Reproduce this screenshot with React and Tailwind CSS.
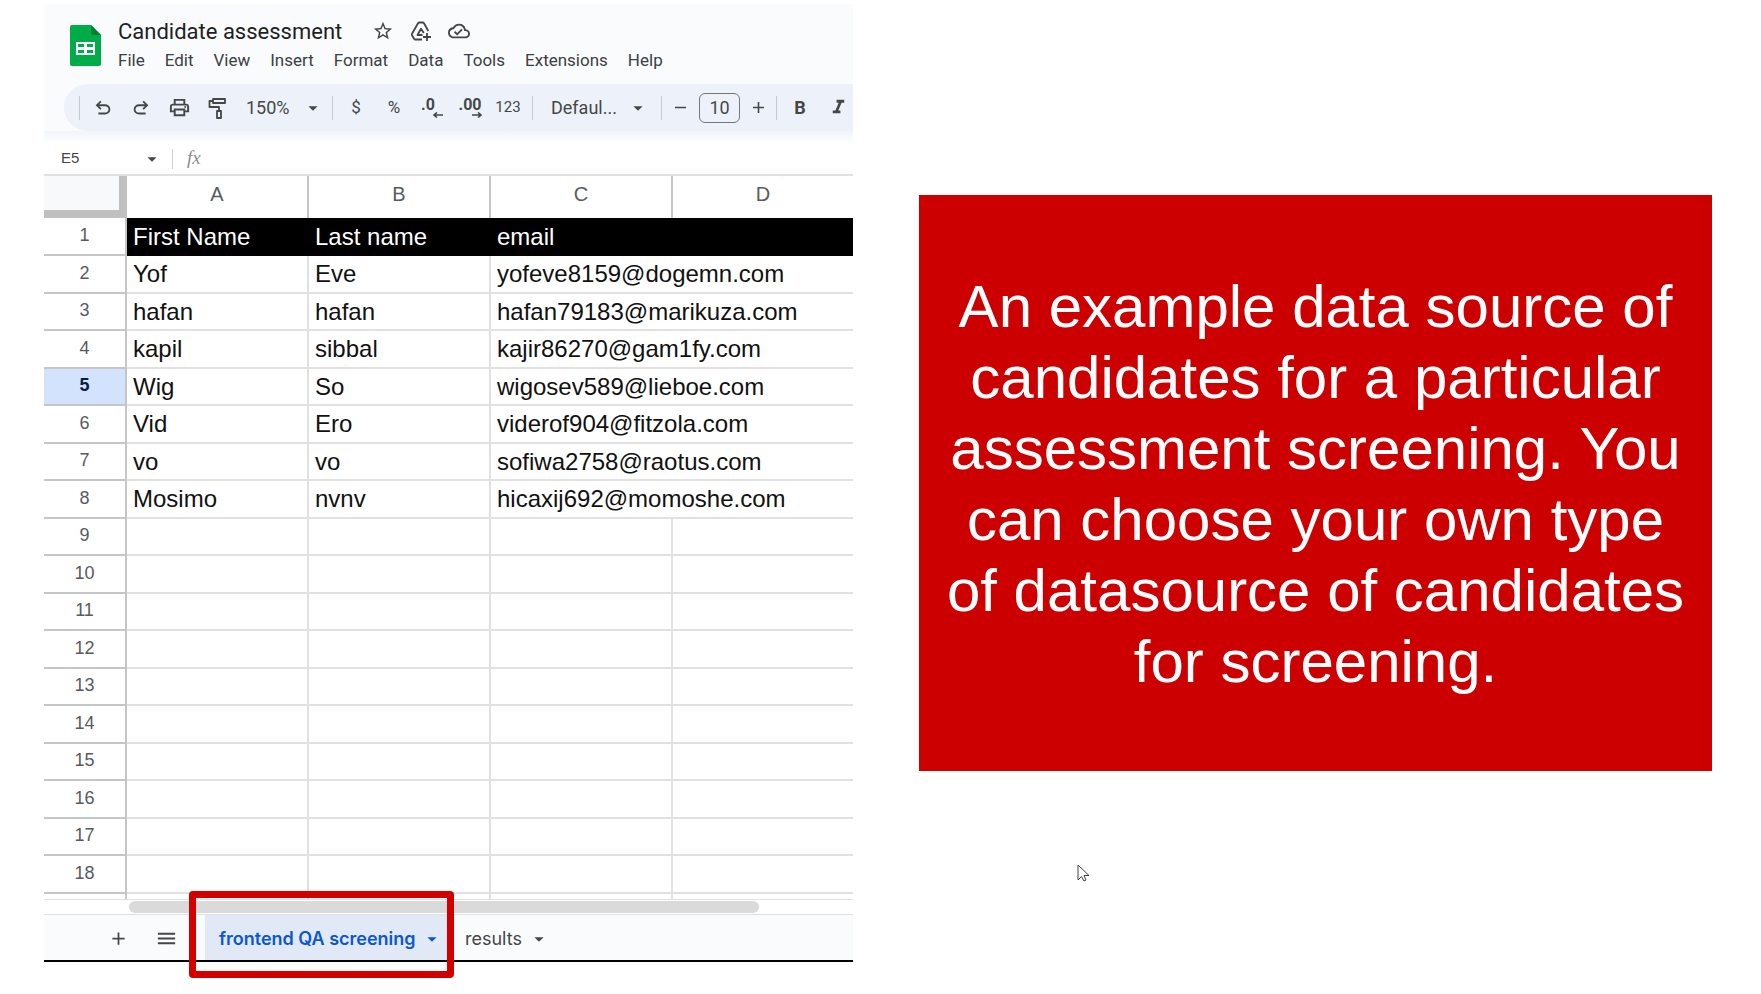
import React, { useState } from 'react'
import { MdAdd, MdArrowDropDown, MdFormatItalic, MdMenu, MdOutlineCloudDone, MdOutlinePrint, MdRemove, MdStarBorder } from 'react-icons/md'

const menus = ['File', 'Edit', 'View', 'Insert', 'Format', 'Data', 'Tools', 'Extensions', 'Help']

const people = [
    { first: 'Yof', last: 'Eve', email: 'yofeve8159@dogemn.com' },
    { first: 'hafan', last: 'hafan', email: 'hafan79183@marikuza.com' },
    { first: 'kapil', last: 'sibbal', email: 'kajir86270@gam1fy.com' },
    { first: 'Wig', last: 'So', email: 'wigosev589@lieboe.com' },
    { first: 'Vid', last: 'Ero', email: 'viderof904@fitzola.com' },
    { first: 'vo', last: 'vo', email: 'sofiwa2758@raotus.com' },
    { first: 'Mosimo', last: 'nvnv', email: 'hicaxij692@momoshe.com' },
]

const emptyRows = [9, 10, 11, 12, 13, 14, 15, 16, 17, 18]

const SheetsLogo = () => (
    <svg viewBox="0 0 31 41" className="h-[41px] w-[31px]">
        <path d="M2 0h19l10 10v29a2 2 0 0 1-2 2H2a2 2 0 0 1-2-2V2a2 2 0 0 1 2-2z" fill="#00ac47" />
        <path d="M21 0l10 10H23a2 2 0 0 1-2-2z" fill="#00832d" />
        <path d="M6 17h19v13H6z" fill="#fff" />
        <path d="M8 19h6v3H8zM17 19h6v3h-6zM8 25h6v3H8zM17 25h6v3h-6z" fill="#00ac47" />
    </svg>
)

const AddToDrive = () => (
    <svg viewBox="0 0 22 22" fill="none" stroke="currentColor" strokeWidth="1.800" strokeLinejoin="round" className="size-[22px]">
        <path d="M12 19.500H5.500Q4.500 19.500 4 18.700L2 15.200Q1.600 14.500 2 13.800L8 3.300Q8.500 2.500 9.400 2.500H12.600Q13.500 2.500 14 3.300L18.300 11" />
        <path d="M12.500 15H7.500L11 8.800L13.800 13" />
        <path d="M17 13v8M13 17h8" />
    </svg>
)

const Undo = () => (
    <svg viewBox="0 0 24 24" fill="currentColor" className="size-[22px]">
        <path d="M7 19v-2h7.1q1.575 0 2.738-1T18 13.5q0-1.5-1.163-2.5T14.1 10H7.8l2.6 2.6L9 14 4 9l5-5 1.4 1.4L7.8 8h6.3q2.425 0 4.163 1.575T20 13.5q0 2.35-1.737 3.925T14.1 19z" />
    </svg>
)

const Redo = () => (
    <svg viewBox="0 0 24 24" fill="currentColor" className="size-[22px]">
        <path d="M9.9 19q-2.425 0-4.163-1.575T4 13.5q0-2.35 1.738-3.925T9.9 8h6.3l-2.6-2.6L15 4l5 5-5 5-1.4-1.4 2.6-2.6H9.9q-1.575 0-2.738 1T6 13.5q0 1.5 1.163 2.5T9.9 17H17v2z" />
    </svg>
)

const PaintRoller = () => (
    <svg viewBox="0 0 18 22" fill="none" stroke="currentColor" strokeWidth="1.800" strokeLinejoin="round" className="h-[22px] w-[18px]">
        <path d="M5 2h12v4H5zM5 4H1.500v6H11v4M9 14h4v7H9z" />
    </svg>
)

const Decimals = ({ digits, right }) => (
    <span className="flex flex-col items-end">
        <span className={right ? 'text-[16px] leading-[14px] font-bold' : 'pr-2 text-[16px] leading-[14px] font-bold'}>{digits}</span>
        <svg viewBox="0 0 10 6" fill="none" stroke="currentColor" strokeWidth="1.600" className="h-[6px] w-[10px]">
            <path d={right ? 'M0 3h9M6 0.500L9 3L6 5.500' : 'M10 3H1M4 0.500L1 3l3 2.500'} />
        </svg>
    </span>
)

const ToolButton = ({ label, children }) => (
    <button type="button" aria-label={label} className="flex h-8 w-[38px] shrink-0 items-center justify-center">
        {children}
    </button>
)

const Divider = () => <div className="h-6 w-px shrink-0 bg-[#c7cbd1]" />

const Toolbar = () => {
    const [size, setSize] = useState('10')

    return (
        <div className="ml-5 flex h-[47px] items-center overflow-hidden rounded-l-full bg-[#edf2fa] pl-[15px] text-[18px] text-[#444746]">
            <Divider />
            <div className="ml-1 flex">
                <ToolButton label="Undo"><Undo /></ToolButton>
                <ToolButton label="Redo"><Redo /></ToolButton>
                <ToolButton label="Print"><MdOutlinePrint size={23} /></ToolButton>
                <ToolButton label="Paint format"><PaintRoller /></ToolButton>
            </div>
            <button type="button" className="flex w-[88px] shrink-0 items-center justify-between pl-[10px]">
                150%
                <MdArrowDropDown size={22} />
            </button>
            <div className="ml-2"><Divider /></div>
            <div className="ml-1 flex text-[17px]">
                <ToolButton label="Currency">$</ToolButton>
                <ToolButton label="Percent">%</ToolButton>
                <ToolButton label="Fewer decimals"><Decimals digits=".0" /></ToolButton>
                <ToolButton label="More decimals"><Decimals digits=".00" right /></ToolButton>
                <ToolButton label="More formats"><span className="text-[15px]">123</span></ToolButton>
            </div>
            <div className="ml-[5px]"><Divider /></div>
            <button type="button" className="flex w-[116px] shrink-0 items-center justify-between pl-[18px]">
                Defaul...
                <MdArrowDropDown size={22} />
            </button>
            <div className="ml-3"><Divider /></div>
            <button type="button" aria-label="Smaller" className="flex w-[37px] shrink-0 justify-center"><MdRemove size={19} /></button>
            <input
                aria-label="Font size"
                value={size}
                onChange={(e) => setSize(e.target.value)}
                className="h-[30px] w-[41px] shrink-0 rounded-md border border-[#747775] text-center"
            />
            <button type="button" aria-label="Larger" className="flex w-[36px] shrink-0 justify-center"><MdAdd size={19} /></button>
            <Divider />
            <div className="ml-1 flex">
                <ToolButton label="Bold"><b>B</b></ToolButton>
                <ToolButton label="Italic"><MdFormatItalic size={23} /></ToolButton>
            </div>
        </div>
    )
}

const rowHead = 'border-r-2 border-b-2 border-[#c4c7c5] pb-[3px] text-center text-[18px] leading-[26px] font-normal'
const cell = 'border-r-2 border-b-2 border-[#e1e1e1] pl-[6px] text-left'
const colHead = 'border-r-2 border-[#c4c7c5] pb-[6px] font-normal'

const Grid = () => (
    <table className="w-full table-fixed border-separate border-spacing-0 font-['Liberation_Sans',Arial,sans-serif] text-[24px] leading-[30px]">
        <colgroup>
            <col className="w-[83px]" />
            <col className="w-[182px]" />
            <col className="w-[182px]" />
            <col className="w-[182px]" />
            <col />
        </colgroup>
        <thead>
            <tr className="h-[42px] text-[20px] text-[#575b5f]">
                <td className="border-r-8 border-b-8 border-[#c0c0c0] bg-[#f8f9fa]"></td>
                <th scope="col" className={colHead}>A</th>
                <th scope="col" className={colHead}>B</th>
                <th scope="col" className={colHead}>C</th>
                <th scope="col" className="pb-[6px] font-normal">D</th>
            </tr>
        </thead>
        <tbody className="text-[#111]">
            <tr className="h-[38px] text-white">
                <th scope="row" className={`${rowHead} text-[#575b5f]`}>1</th>
                <td className="bg-black pl-[6px]">First Name</td>
                <td className="bg-black pl-[6px]">Last name</td>
                <td colSpan={2} className="bg-black pl-[6px]">email</td>
            </tr>
            {people.map((p, i) => (
                <tr key={p.email} className="odd:h-[37px] even:h-[38px]">
                    <th scope="row" className={i === 3 ? `${rowHead} bg-[#d3e3fd] text-[#041e49]` : `${rowHead} text-[#575b5f]`}>
                        {i === 3 ? <b>{i + 2}</b> : i + 2}
                    </th>
                    <td className={cell}>{p.first}</td>
                    <td className={cell}>{p.last}</td>
                    <td colSpan={2} className="border-b-2 border-[#e1e1e1] pl-[6px]">{p.email}</td>
                </tr>
            ))}
            {emptyRows.map((n) => (
                <tr key={n} className="odd:h-[37px] even:h-[38px]">
                    <th scope="row" className={`${rowHead} text-[#575b5f]`}>{n}</th>
                    <td className={cell}></td>
                    <td className={cell}></td>
                    <td className={cell}></td>
                    <td className="border-b-2 border-[#e1e1e1]"></td>
                </tr>
            ))}
            <tr className="h-[5px]">
                <td className="border-r-2 border-[#c4c7c5]"></td>
                <td className="border-r-2 border-[#e1e1e1]"></td>
                <td className="border-r-2 border-[#e1e1e1]"></td>
                <td className="border-r-2 border-[#e1e1e1]"></td>
                <td></td>
            </tr>
        </tbody>
    </table>
)

const SheetTabs = () => (
    <div className="flex h-[47px] items-stretch border-b-2 border-black bg-[#f9fbfd] font-[Inter,sans-serif] text-[18px] text-[#444746]">
        <button type="button" aria-label="Add sheet" className="ml-[54px] flex w-10 items-center justify-center pt-[2px]"><MdAdd size={21} /></button>
        <button type="button" aria-label="All sheets" className="ml-2 flex w-10 items-center justify-center pt-[2px]"><MdMenu size={23} /></button>
        <button type="button" className="relative ml-[19px] flex w-[242px] items-center justify-between bg-[#e1e9f7] pt-[2px] pr-1 pl-[14px] font-semibold whitespace-nowrap text-[#0b57d0]">
            frontend QA screening
            <MdArrowDropDown size={22} />
            {/* highlight around the active tab */}
            <span className="absolute -top-6 -right-[7px] -bottom-[18px] -left-4 rounded border-[7px] border-[#d20000]"></span>
        </button>
        <button type="button" className="ml-[18px] flex items-center gap-[6px] pt-[2px]">
            results
            <MdArrowDropDown size={22} />
        </button>
    </div>
)

const App = () => {
    return (
        <main className="flex min-h-screen gap-[66px] bg-white pr-[49px] pl-11 font-[Roboto,sans-serif]">
            <section className="min-w-0 flex-[809] pt-1">
                <header className="bg-[#f9fbfd] pt-4">
                    <div className="flex gap-[17px] pl-[26px]">
                        <div className="shrink-0 pt-[5px]"><SheetsLogo /></div>
                        <div>
                            <div className="flex h-[22px] items-center gap-4 text-[#444746]">
                                <h1 className="mr-[14px] text-[22px] text-[#1f1f1f]">Candidate assessment</h1>
                                <MdStarBorder size={22} />
                                <AddToDrive />
                                <MdOutlineCloudDone size={22} />
                            </div>
                            <nav className="mt-[5px] flex h-[27px] items-center gap-5 text-[17px] text-[#3c4043]">
                                {menus.map((m) => (
                                    <button type="button" key={m}>{m}</button>
                                ))}
                            </nav>
                        </div>
                    </div>
                    <div className="pt-[10px]"><Toolbar /></div>
                </header>
                <div className="flex h-[45px] items-center border-b-2 border-[#e1e1e1] bg-linear-to-b from-[#f1f5fb] to-white to-30% pt-3 text-[#444746]">
                    <button type="button" className="flex w-[119px] items-center justify-between pl-[17px] font-['Liberation_Sans',Arial,sans-serif] text-[15px]">
                        E5
                        <MdArrowDropDown size={22} />
                    </button>
                    <div className="ml-[9px] h-5 w-px bg-[#d0d3d6]"></div>
                    <i className="ml-[14px] font-['Liberation_Serif',serif] text-[19px] text-[#8a8d90]">fx</i>
                </div>
                <Grid />
                <div className="flex h-4 items-center border-y border-[#e1e1e1] pl-[85px]">
                    <div className="h-3 w-[87%] rounded-full bg-[#dadada]"></div>
                </div>
                <SheetTabs />
            </section>
            <aside className="relative mt-[195px] flex h-[576px] min-w-0 flex-[793] items-center justify-center bg-[#cc0000]">
                <p className="px-5 pt-[2px] text-center font-['Liberation_Sans',Arial,sans-serif] text-[60px] leading-[71px] text-white">
                    An example data source of candidates for a particular assessment screening. You can choose your own type of datasource of candidates for screening.
                </p>
                {/* mouse pointer */}
                <svg viewBox="0 0 13 18" className="absolute top-[669px] left-[158px] h-[18px] w-[13px]">
                    <path d="M1 1v15l3.500-3.500 2.500 4.500 2-1-2-4.500h5z" fill="#fff" stroke="#444" strokeWidth="1" />
                </svg>
            </aside>
        </main>
    )
}

export default App
